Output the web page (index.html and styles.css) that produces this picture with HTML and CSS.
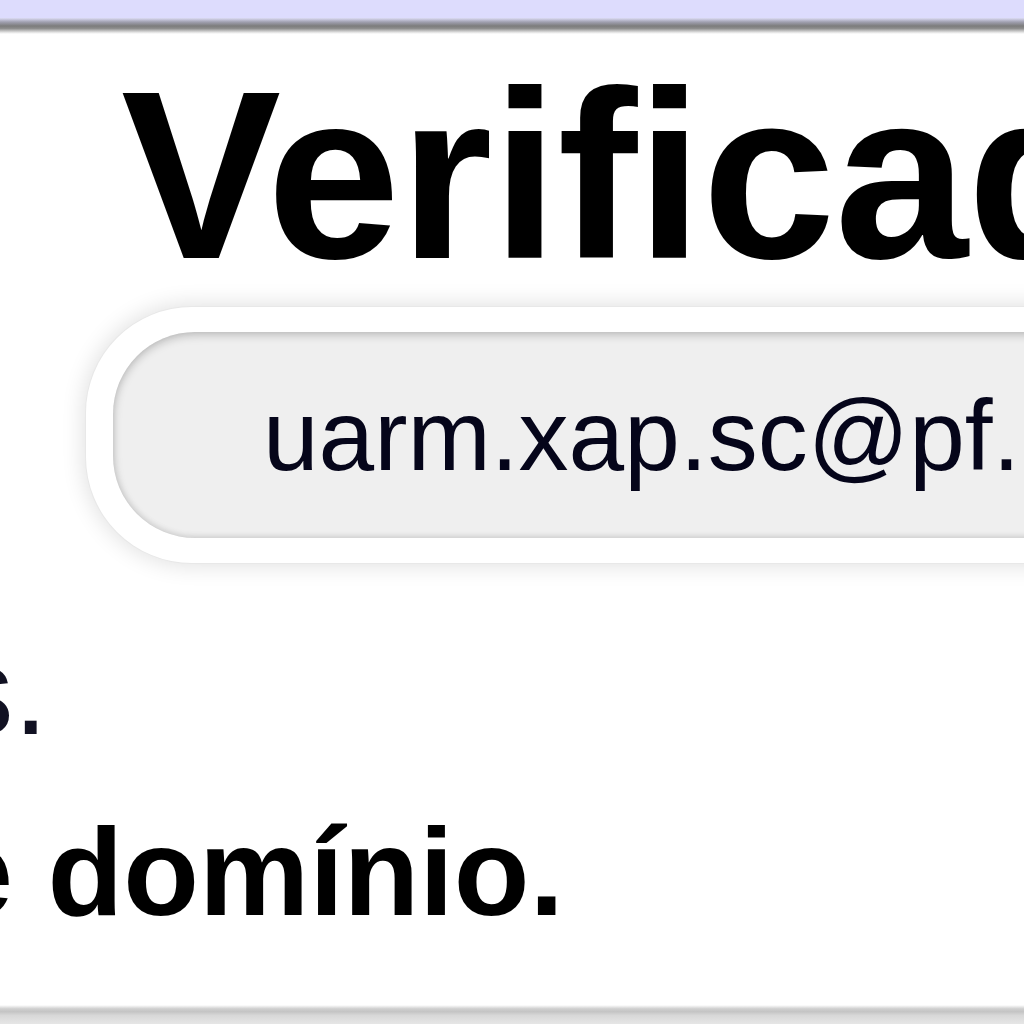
FILE: index.html
```html
<!DOCTYPE html>
<html lang="pt-BR">
<head>
<meta charset="utf-8">
<title>E-mail verificado</title>
<link rel="stylesheet" href="styles.css">
</head>
<body>
  <div class="top-band"></div>
  <div class="top-rule"></div>
  <h1 class="title">Verificado</h1>
  <div class="pill-outer">
    <div class="pill-inner">uarm.xap.sc@pf.gov.br</div>
  </div>
  <div class="line line-a"><span>Enviamos um código para os endereços cadastrados.</span></div>
  <div class="line line-b"><span>Use o seu e-mail de domínio.</span></div>
  <div class="bottom-rule"></div>
</body>
</html>
```
FILE: styles.css
```css
html, body {
  margin: 0;
  padding: 0;
  background: #ffffff;
  overflow: hidden;
  height: 1024px;
}

body {
  font-family: "Liberation Sans", Arial, sans-serif;
  color: #000;
}

.top-band {
  height: 18px;
  background: #dddcfd;
}

.top-rule {
  height: 16px;
  background: linear-gradient(#dcdcf4 0%, #a0a0b0 25%, #7c7c7c 50%, #8c8c8c 65%, #e4e4e4 90%, #ffffff 100%);
}

.title {
  margin: 21px 0 0;
  padding-left: 121px;
  font-size: 240px;
  line-height: 240px;
  font-weight: bold;
  letter-spacing: -1px;
  white-space: nowrap;
}

.pill-outer {
  margin: 12px 0 0 86px;
  width: 1400px;
  height: 256px;
  box-sizing: border-box;
  padding: 25px 0 25px 27px;
  background: #ffffff;
  border-radius: 106px;
  box-shadow: 0 0 0 1px #e8e8e8, 0 0 22px 3px rgba(0, 0, 0, 0.12);
}

.pill-inner {
  height: 206px;
  box-sizing: border-box;
  padding: 53px 0 0 150px;
  background: #efefef;
  border-radius: 82px;
  box-shadow: inset 0 3px 10px rgba(0, 0, 0, 0.22), inset 0 -2px 6px rgba(0, 0, 0, 0.08);
  font-size: 100px;
  line-height: 101px;
  color: #05051a;
  white-space: nowrap;
}

.line {
  display: flex;
  justify-content: flex-end;
  white-space: nowrap;
  font-size: 124px;
  line-height: 124px;
}

.line span {
  flex: none;
}

.line-a {
  margin-top: 66px;
  width: 48px;
  color: #111122;
}

.line-b {
  margin-top: 57px;
  width: 564px;
  font-weight: bold;
}

.bottom-rule {
  margin-top: 71px;
  height: 19px;
  background: linear-gradient(#ffffff 0%, #cfcfcf 20%, #c4c4c4 35%, #d8d8d8 55%, #e6e6e6 100%);
}
```
